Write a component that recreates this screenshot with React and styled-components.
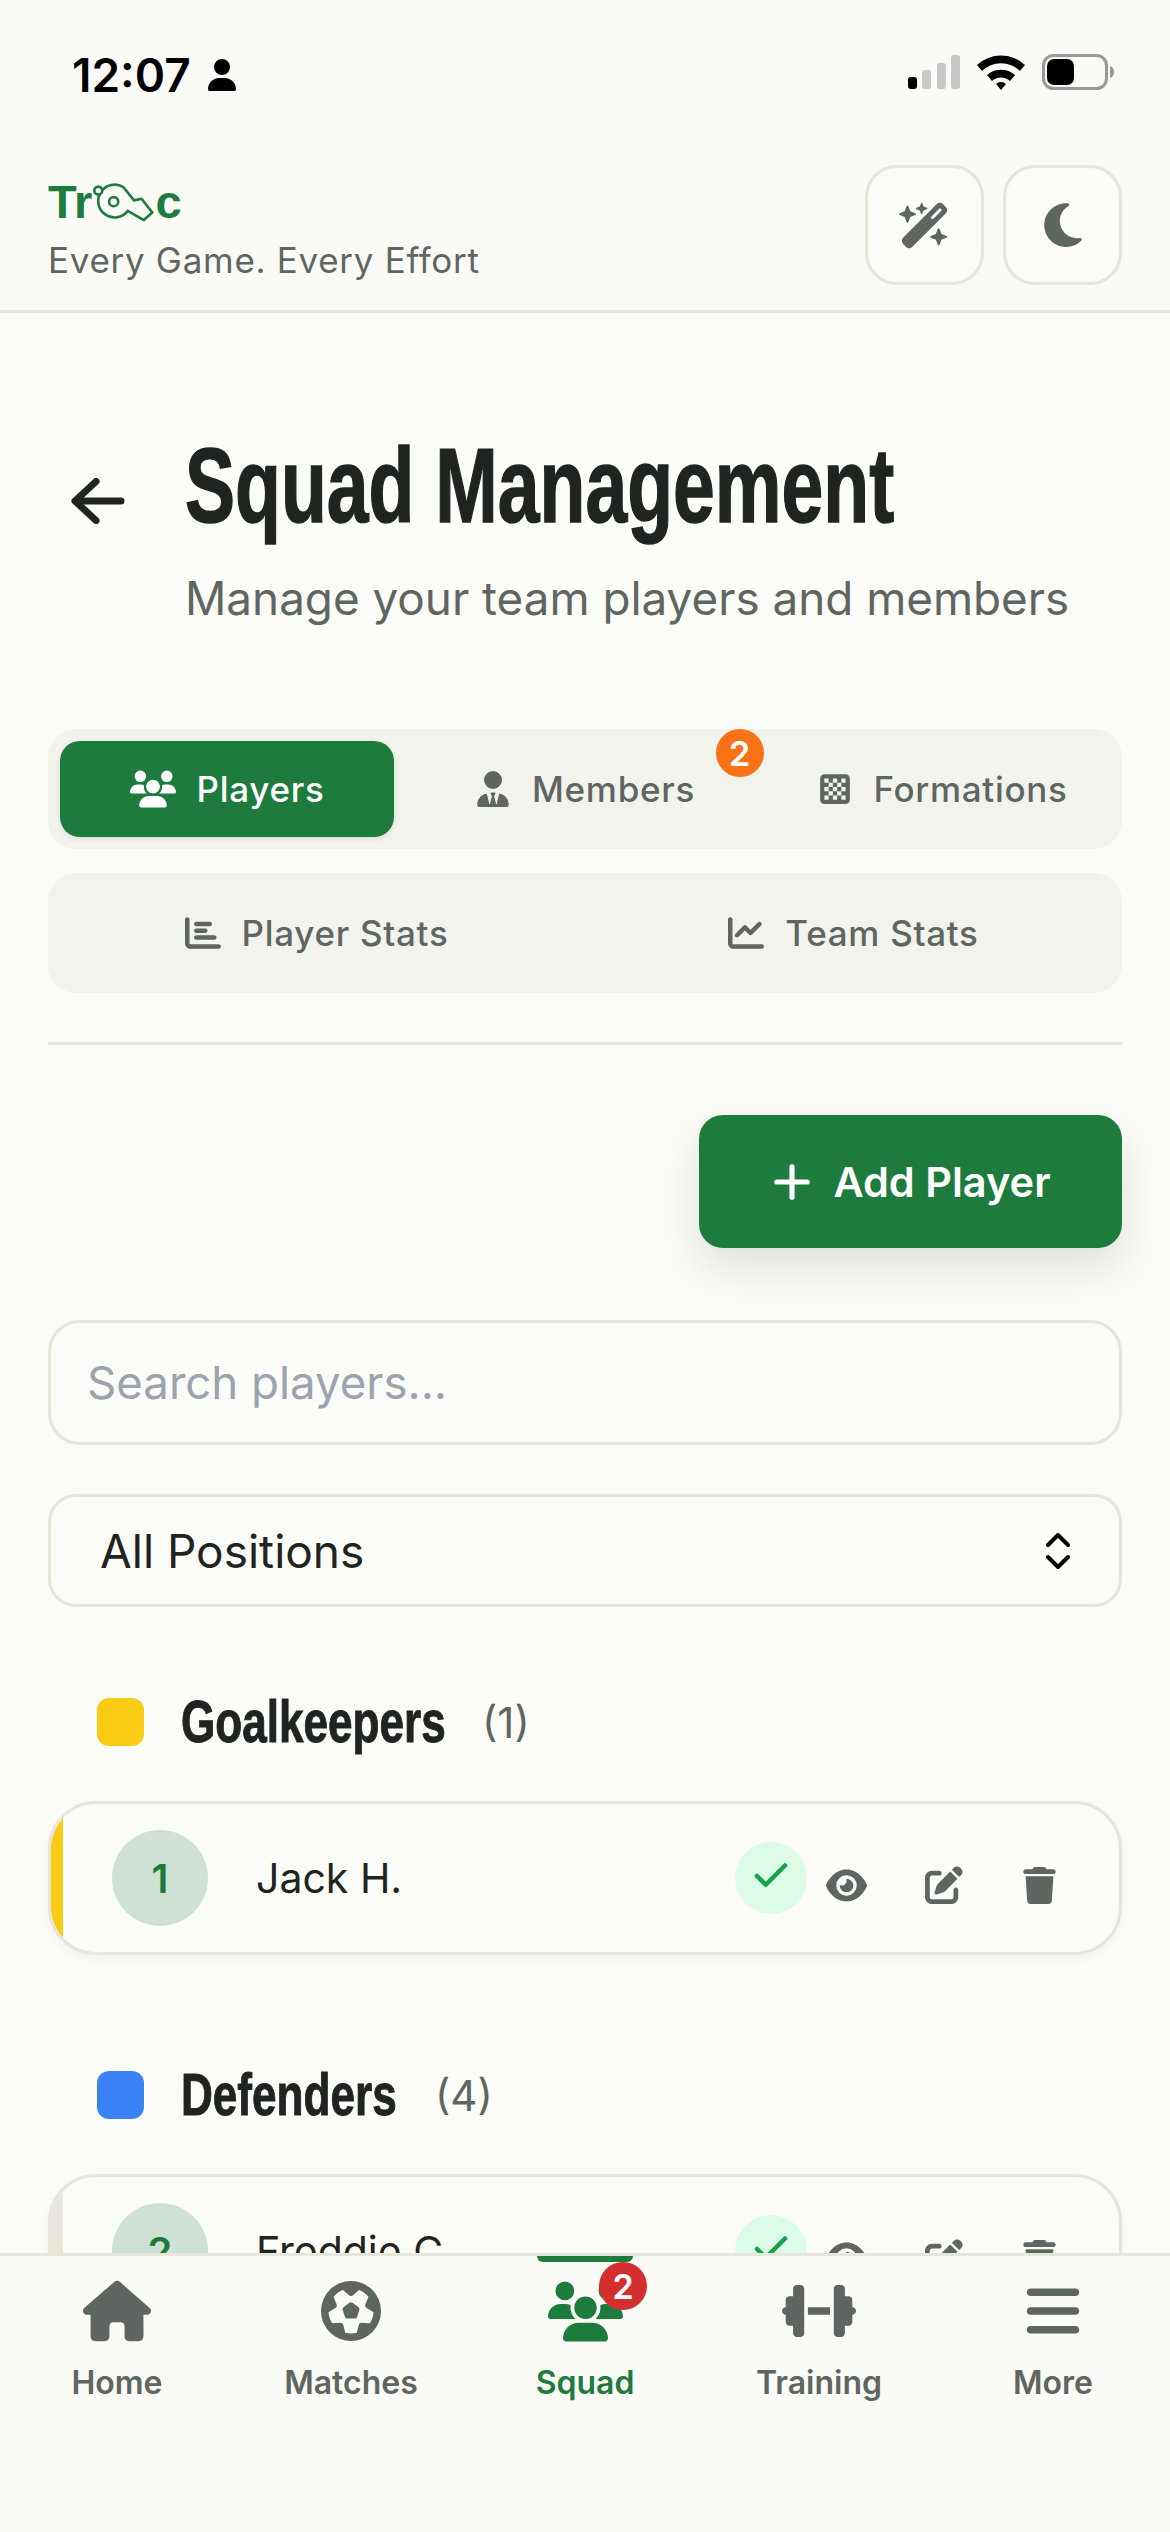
import React from "react";
import styled, { createGlobalStyle } from "styled-components";
import {
  FaWandMagicSparkles, FaMoon, FaUsers, FaUserTie, FaChessBoard, FaChartBar, FaChartLine,
  FaEye, FaPenToSquare, FaTrash, FaHouse, FaFutbol, FaDumbbell, FaBars, FaUser,
} from "react-icons/fa6";
import { Check, Plus } from "lucide-react";

const GREEN = "#1e7b3e";
const MUTED = "#5f6661";
const INK = "#1f2421";
const LINE = "#e6e6da";
const PAGE = "#fbfbf7";

const Global = createGlobalStyle`
  html, body { margin: 0; padding: 0; background: ${PAGE}; }
  * { box-sizing: border-box; }
  body { font-family: Inter, "Liberation Sans", sans-serif; color: ${INK}; }
`;

const Screen = styled.div`
  width: 1170px; height: 2532px; display: flex; flex-direction: column; overflow: hidden; background: ${PAGE};
`;
const StatusBar = styled.div`
  height: 130px; flex: none; display: flex; align-items: flex-start; justify-content: space-between;
  padding: 52px 56px 0 72px; background: #fafaf7;
`;
const StatusLeft = styled.div`display: flex; align-items: center; gap: 15px; color: #000;`;
const Time = styled.span`font-size: 46px; line-height: 46px; font-weight: 600;`;
const StatusRight = styled.div`display: flex; align-items: center; gap: 16px; margin-top: 2px;`;

const Header = styled.header`
  height: 183px; flex: none; display: flex; justify-content: space-between; align-items: flex-start;
  padding: 35px 48px 0 48px; border-bottom: 3px solid ${LINE}; background: #fafaf7;
`;
const Brand = styled.div`display: flex; flex-direction: column; padding-top: 15px;`;
const Logo = styled.div`
  display: flex; align-items: center; height: 44px; font: 700 47px/44px "Liberation Sans", sans-serif; color: ${GREEN};
`;
const Tagline = styled.div`font-size: 35px; line-height: 44px; margin-top: 14px; color: ${MUTED}; letter-spacing: 0.7px;`;
const HeaderButtons = styled.div`display: flex; gap: 19px;`;
const IconButton = styled.div`
  width: 119px; height: 120px; border: 3px solid ${LINE}; border-radius: 32px; background: ${PAGE};
  display: flex; align-items: center; justify-content: center; color: ${MUTED};
`;

const Main = styled.main`flex: 1; min-height: 0; overflow: hidden; padding: 0 48px;`;
const TitleRow = styled.div`display: flex; align-items: flex-start; margin-top: 113px;`;
const Back = styled.div`width: 137px; flex: none; padding: 52px 0 0 23px; color: ${INK}; display: flex;`;
const TitleBlock = styled.div`min-width: 0;`;
const Title = styled.h1`
  margin: 0; font: 700 105px/120px "Liberation Sans", sans-serif; color: ${INK}; white-space: nowrap;
  width: 711px; transform: scaleX(0.715); transform-origin: left center; -webkit-text-stroke: 1.5px ${INK};
`;
const Subtitle = styled.p`margin: 23px 0 0; font-size: 45.8px; line-height: 60px; color: ${MUTED}; white-space: nowrap;`;

const TabBar = styled.div`
  display: grid; grid-template-columns: repeat(${p => p.$cols}, 1fr); gap: 24px; padding: 12px; height: 120px;
  background: #f3f3ed; border-radius: 28px; margin-top: ${p => p.$top}px;
`;
const Tab = styled.div`
  position: relative; display: flex; align-items: center; justify-content: center; gap: 21px; border-radius: 20px;
  font-size: 35px; font-weight: 500; letter-spacing: 0.7px; color: ${p => (p.$active ? "#fff" : MUTED)};
  background: ${p => (p.$active ? GREEN : "transparent")};
  box-shadow: ${p => (p.$active ? "0 2px 6px rgba(0,0,0,.08)" : "none")};
`;
const CountBadge = styled.span`
  position: absolute; width: 48px; height: 48px; border-radius: 50%; color: #fff; font-size: 34px; font-weight: 600;
  display: flex; align-items: center; justify-content: center; background: ${p => p.$bg};
  top: ${p => p.$top}px; right: ${p => p.$right}px;
`;
const Divider = styled.hr`margin: 49px 0 0; border: 0; height: 3px; background: ${LINE};`;
const ActionRow = styled.div`display: flex; justify-content: flex-end; margin-top: 70px;`;
const AddButton = styled.div`
  width: 423px; height: 133px; padding-right: 4px; border-radius: 24px; background: ${GREEN}; color: #fff; display: flex;
  align-items: center; justify-content: center; gap: 15px; font-size: 41.5px; font-weight: 600;
  box-shadow: 0 20px 40px rgba(0,0,0,.11);
`;
const Search = styled.input`
  display: block; width: 100%; height: 125px; margin-top: 72px; padding: 0 36px; border: 3px solid ${LINE}; border-radius: 32px;
  background: ${PAGE}; font: 400 45.6px Inter, sans-serif; color: ${INK}; outline: none;
  &::placeholder { color: #9ca3af; opacity: 1; }
`;
const Select = styled.div`
  display: flex; align-items: center; justify-content: space-between; height: 113px; margin-top: 49px; padding: 0 48px 0 49px;
  border: 3px solid ${LINE}; border-radius: 28px; background: ${PAGE}; font-size: 46px; color: ${INK};
`;
const SectionHead = styled.div`
  display: flex; align-items: center; padding-left: 49px; height: 60px; margin-top: ${p => p.$top}px;
`;
const Swatch = styled.span`width: 47px; height: 48px; border-radius: 12px; background: ${p => p.$c}; flex: none;`;
const SectionTitle = styled.h2`
  margin: 0 0 0 37px; font: 700 60px/60px "Liberation Sans", sans-serif; color: ${INK}; white-space: nowrap;
  width: ${p => p.$w}px; transform: scaleX(0.735); transform-origin: left center; -webkit-text-stroke: 1px ${INK};
`;
const Count = styled.span`margin-left: 40px; font-size: 42px; color: ${MUTED};`;
const Card = styled.div`
  position: relative; overflow: hidden; display: flex; align-items: center; height: 154px; margin-top: ${p => p.$top}px;
  padding: 0 44px 0 61px; border: 3px solid #e8e6da; border-radius: 48px; background: ${PAGE};
  box-shadow: 0 4px 10px rgba(0,0,0,.04);
  &::before {
    content: ""; position: absolute; left: 0; top: 0; bottom: 0; width: 12px; background: ${p => p.$edge};
  }
`;
const Avatar = styled.div`
  width: 96px; height: 96px; border-radius: 50%; background: #cfe0d4; color: ${GREEN}; font-size: 40px; font-weight: 600;
  display: flex; align-items: center; justify-content: center; flex: none;
`;
const Name = styled.div`margin-left: 48px; font-size: 41px; font-weight: 400; flex: 1;`;
const Verified = styled.div`
  width: 72px; height: 72px; border-radius: 50%; background: #dcfce7; color: #16a34a; display: flex;
  align-items: center; justify-content: center; padding-bottom: 4px; flex: none;
`;
const Actions = styled.div`display: flex; align-items: center; color: ${MUTED}; margin-top: 14px;`;
const Action = styled.div`width: ${p => p.$w}px; display: flex; justify-content: center;`;

const BottomNav = styled.nav`
  height: 279px; flex: none; display: grid; grid-template-columns: repeat(5, 1fr); border-top: 3px solid ${LINE}; background: #fafaf7;
`;
const NavItem = styled.div`
  position: relative; display: flex; flex-direction: column; align-items: center; padding-top: 25px;
  color: ${p => (p.$active ? GREEN : MUTED)};
`;
const NavIcon = styled.div`height: 60px; display: flex; align-items: center; justify-content: center;`;
const NavLabel = styled.span`margin-top: 20px; font-size: 32px; line-height: 44px; font-weight: 600;`;
const NavMarker = styled.span`
  position: absolute; top: 0; left: 69px; width: 96px; height: 6px; background: ${GREEN}; border-radius: 0 0 6px 6px;
`;

const Whistle = () => (
  <svg width="63" height="40" viewBox="195 62 190 122" fill="none" stroke={GREEN} strokeWidth="8" strokeLinejoin="round">
    <path d="M303 150 A50 50 0 1 1 290 78 L322 118 L345 113 L378 155 L352 178 Z" />
    <circle cx="260" cy="122" r="14" />
    <circle cx="213" cy="88" r="12" fill="#fafaf7" />
  </svg>
);
const Signal = () => (
  <svg width="52" height="34" viewBox="0 0 52 34">
    <rect x="0" y="22" width="9" height="12" rx="3" fill="#000" />
    <rect x="14" y="15" width="9" height="19" rx="3" fill="#c8c8c8" />
    <rect x="29" y="8" width="9" height="26" rx="3" fill="#c8c8c8" />
    <rect x="43" y="0" width="9" height="34" rx="3" fill="#c8c8c8" />
  </svg>
);
const Wifi = () => (
  <svg width="50" height="36" viewBox="0 0 50 36" fill="#000">
    <path d="M1 11 A35 35 0 0 1 49 11 L44 17 A27 27 0 0 0 6 17 Z" />
    <path d="M11 21 A21 21 0 0 1 39 21 L34 27 A13 13 0 0 0 16 27 Z" />
    <path d="M20 30 A7 7 0 0 1 30 30 L25 36 Z" />
  </svg>
);
const Battery = () => (
  <svg width="72" height="36" viewBox="0 0 72 36">
    <rect x="1.5" y="1.5" width="63" height="33" rx="10" fill="none" stroke="#999" strokeWidth="3" />
    <rect x="5" y="5" width="27" height="26" rx="7" fill="#000" />
    <path d="M68 12 C71 13 72 15 72 18 C72 21 71 23 68 24 Z" fill="#999" />
  </svg>
);
const UpDown = () => (
  <svg width="26" height="38" viewBox="0 0 26 38" fill="none" stroke="#000" strokeWidth="4" strokeLinecap="round" strokeLinejoin="round">
    <path d="M3 13 L13 3 L23 13" />
    <path d="M3 25 L13 35 L23 25" />
  </svg>
);
const BackArrow = () => (
  <svg width="54" height="46" viewBox="0 0 54 46" fill="none" stroke={INK} strokeWidth="7" strokeLinecap="round" strokeLinejoin="round">
    <path d="M5 23 H50" />
    <path d="M25 3.5 L4 23 L25 42.5" />
  </svg>
);

const Status = () => (
  <>
    <Verified><Check size={42} strokeWidth={2.6} /></Verified>
    <Actions>
      <Action $w={78}><FaEye size={41} /></Action>
      <Action $w={118}><FaPenToSquare size={38} /></Action>
      <Action $w={72}><FaTrash size={37} /></Action>
    </Actions>
  </>
);

const NAV = [
  { label: "Home", icon: <FaHouse size={68} /> },
  { label: "Matches", icon: <FaFutbol size={60} /> },
  { label: "Squad", icon: <FaUsers size={75} />, active: true },
  { label: "Training", icon: <FaDumbbell size={74} /> },
  { label: "More", icon: <FaBars size={60} /> },
];

export default function App() {
  return (
    <Screen>
      <Global />
      <StatusBar>
        <StatusLeft><Time>12:07</Time><FaUser size={32} /></StatusLeft>
        <StatusRight><Signal /><Wifi /><Battery /></StatusRight>
      </StatusBar>
      <Header>
        <Brand>
          <Logo>Tr<Whistle />c</Logo>
          <Tagline>Every Game. Every Effort</Tagline>
        </Brand>
        <HeaderButtons>
          <IconButton><FaWandMagicSparkles size={51} /></IconButton>
          <IconButton><FaMoon size={50} /></IconButton>
        </HeaderButtons>
      </Header>
      <Main>
        <TitleRow>
          <Back><BackArrow /></Back>
          <TitleBlock>
            <Title>Squad Management</Title>
            <Subtitle>Manage your team players and members</Subtitle>
          </TitleBlock>
        </TitleRow>
        <TabBar $cols={3} $top={100}>
          <Tab $active><FaUsers size={46} />Players</Tab>
          <Tab><FaUserTie size={36} />Members<CountBadge $bg="#f97316" $top={-12} $right={-12}>2</CountBadge></Tab>
          <Tab><FaChessBoard size={34} />Formations</Tab>
        </TabBar>
        <TabBar $cols={2} $top={24}>
          <Tab><FaChartBar size={36} />Player Stats</Tab>
          <Tab><FaChartLine size={36} />Team Stats</Tab>
        </TabBar>
        <Divider />
        <ActionRow>
          <AddButton><Plus size={52} strokeWidth={2.4} />Add Player</AddButton>
        </ActionRow>
        <Search placeholder="Search players..." readOnly />
        <Select>All Positions<UpDown /></Select>
        <SectionHead $top={85}>
          <Swatch $c="#facc15" />
          <SectionTitle $w={261}>Goalkeepers</SectionTitle>
          <Count>(1)</Count>
        </SectionHead>
        <Card $top={49} $edge="#facc15">
          <Avatar>1</Avatar>
          <Name>Jack H.</Name>
          <Status />
        </Card>
        <SectionHead $top={110}>
          <Swatch $c="#3b82f6" />
          <SectionTitle $w={214}>Defenders</SectionTitle>
          <Count>(4)</Count>
        </SectionHead>
        <Card $top={49} $edge="#e8e6da">
          <Avatar>2</Avatar>
          <Name>Freddie C.</Name>
          <Status />
        </Card>
      </Main>
      <BottomNav>
        {NAV.map(n => (
          <NavItem key={n.label} $active={n.active}>
            {n.active && <NavMarker />}
            <NavIcon>{n.icon}</NavIcon>
            <NavLabel>{n.label}</NavLabel>
            {n.active && <CountBadge $bg="#d32f2f" $top={6} $right={55}>2</CountBadge>}
          </NavItem>
        ))}
      </BottomNav>
    </Screen>
  );
}
